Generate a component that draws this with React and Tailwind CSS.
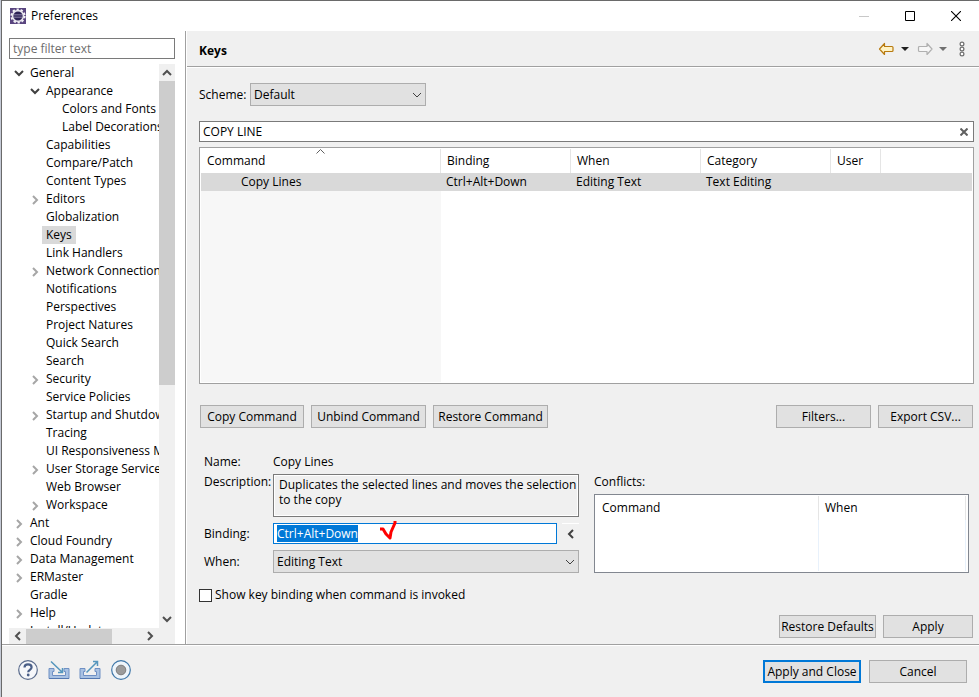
import { useEffect, useRef, useState } from "react";

const tree = [
  { label: "General", depth: 0, state: "open" },
  { label: "Appearance", depth: 1, state: "open" },
  { label: "Colors and Fonts", depth: 2 },
  { label: "Label Decorations", depth: 2 },
  { label: "Capabilities", depth: 1 },
  { label: "Compare/Patch", depth: 1 },
  { label: "Content Types", depth: 1 },
  { label: "Editors", depth: 1, state: "closed" },
  { label: "Globalization", depth: 1 },
  { label: "Keys", depth: 1 },
  { label: "Link Handlers", depth: 1 },
  { label: "Network Connections", depth: 1, state: "closed" },
  { label: "Notifications", depth: 1 },
  { label: "Perspectives", depth: 1 },
  { label: "Project Natures", depth: 1 },
  { label: "Quick Search", depth: 1 },
  { label: "Search", depth: 1 },
  { label: "Security", depth: 1, state: "closed" },
  { label: "Service Policies", depth: 1 },
  { label: "Startup and Shutdown", depth: 1, state: "closed" },
  { label: "Tracing", depth: 1 },
  { label: "UI Responsiveness M", depth: 1 },
  { label: "User Storage Service", depth: 1, state: "closed" },
  { label: "Web Browser", depth: 1 },
  { label: "Workspace", depth: 1, state: "closed" },
  { label: "Ant", depth: 0, state: "closed" },
  { label: "Cloud Foundry", depth: 0, state: "closed" },
  { label: "Data Management", depth: 0, state: "closed" },
  { label: "ERMaster", depth: 0, state: "closed" },
  { label: "Gradle", depth: 0 },
  { label: "Help", depth: 0, state: "closed" },
  { label: "Install/Update", depth: 0 },
];

const indent = ["pl-[2px]", "pl-[18px]", "pl-[34px]"];

const chevronPaths = {
  down: "M1 3l4 4 4-4",
  up: "M1 7l4-4 4 4",
  left: "M7 1L3 5l4 4",
  right: "M3 1l4 4-4 4",
};

function Chevron({ dir, className = "", width = 2 }) {
  return (
    <svg
      viewBox="0 0 10 10"
      className={`h-[10px] w-[10px] shrink-0 ${className}`}
      fill="none"
      stroke="currentColor"
      strokeWidth={width}
      aria-hidden="true"
    >
      <path d={chevronPaths[dir]} />
    </svg>
  );
}

function Button({ children, className = "", primary = false }) {
  return (
    <button
      type="button"
      className={`h-[23px] shrink-0 whitespace-nowrap bg-[#e1e1e1] text-center ${
        primary ? "border-2 border-[#0078d7]" : "border border-[#adadad]"
      } ${className}`}
    >
      {children}
    </button>
  );
}

function Select({ id, value, className = "" }) {
  return (
    <div className={`relative ${className}`}>
      <select
        id={id}
        defaultValue={value}
        className="block h-[23px] w-full appearance-none rounded-none border border-[#adadad] bg-[#e1e1e1] px-[3px] outline-none"
      >
        <option>{value}</option>
      </select>
      <Chevron
        dir="down"
        width={1}
        className="pointer-events-none absolute top-[7px] right-[4px] text-[#404040]"
      />
    </div>
  );
}

function AppIcon() {
  return (
    <svg viewBox="0 0 16 16" className="h-4 w-4" aria-hidden="true">
      <rect width="16" height="16" fill="#59457f" />
      <circle cx="8" cy="8" r="6.4" fill="none" stroke="#f4f2f7" strokeWidth="2.4" strokeDasharray="2.2 1.8" />
      <circle cx="8" cy="8" r="5.4" fill="#2c2255" stroke="#e6e3ec" strokeWidth="1.6" />
      <path d="M4 6.5h8M3.6 8h8.8M4 9.5h8" stroke="#8a80a8" strokeWidth="0.7" />
    </svg>
  );
}

function TitleBar() {
  return (
    <header className="flex h-[30px] shrink-0 items-center bg-white pl-2">
      <AppIcon />
      <h1 className="ml-[5px] flex-1">Preferences</h1>
      <div className="flex">
        <button type="button" aria-label="Minimize" className="flex h-[28px] w-[46px] items-center justify-center text-[#c8c8c8]">
          <svg viewBox="0 0 10 10" className="h-[10px] w-[10px]" stroke="currentColor">
            <path d="M0 5.5h10" />
          </svg>
        </button>
        <button type="button" aria-label="Maximize" className="flex h-[28px] w-[46px] items-center justify-center">
          <svg viewBox="0 0 10 10" className="h-[10px] w-[10px]" fill="none" stroke="currentColor">
            <path d="M0.5 0.5h9v9h-9z" />
          </svg>
        </button>
        <button type="button" aria-label="Close" className="flex h-[28px] w-[46px] items-center justify-center">
          <svg viewBox="0 0 10 10" className="h-[10px] w-[10px]" stroke="currentColor" strokeWidth="1.1">
            <path d="M0 0l10 10M10 0L0 10" />
          </svg>
        </button>
      </div>
    </header>
  );
}

function TreeRow({ item, selected, onSelect }) {
  return (
    <li
      role="treeitem"
      aria-selected={selected}
      className={`flex h-[18px] items-center ${indent[item.depth]}`}
    >
      <span className="flex w-[15px] shrink-0 justify-center">
        {item.state === "open" && <Chevron dir="down" className="text-[#404040]" />}
        {item.state === "closed" && (
          <Chevron dir="right" className="mt-[2px] text-[#a6a6a6]" />
        )}
      </span>
      <button
        type="button"
        onClick={onSelect}
        className={`h-[18px] px-1 whitespace-nowrap ${selected ? "bg-[#d9d9d9]" : ""}`}
      >
        {item.label}
      </button>
    </li>
  );
}

function Sidebar() {
  const [selected, setSelected] = useState("Keys");

  return (
    <nav className="flex w-[183px] shrink-0 flex-col bg-white pt-[7px] pr-[10px] pl-[7px]">
      <input
        type="text"
        aria-label="Filter"
        placeholder="type filter text"
        className="h-[21px] w-full border border-[#7a7a7a] px-[3px] outline-none placeholder:text-[#6d6d6d]"
      />
      <div className="mt-[5px] flex min-h-0 flex-1">
        <ul role="tree" className="min-w-0 flex-1 overflow-hidden">
          {tree.map((item) => (
            <TreeRow
              key={item.label}
              item={item}
              selected={item.label === selected}
              onSelect={() => setSelected(item.label)}
            />
          ))}
        </ul>
        <div className="flex w-4 shrink-0 flex-col items-center bg-[#f0f0f0] text-[#505050]">
          <div className="flex h-[17px] items-center">
            <Chevron dir="up" />
          </div>
          <div className="h-[304px] w-full bg-[#cdcdcd]" />
          <div className="mt-auto flex h-[18px] items-center">
            <Chevron dir="down" />
          </div>
        </div>
      </div>
      <div className="flex h-4 shrink-0 items-center bg-[#f0f0f0] text-[#505050]">
        <div className="flex w-[17px] justify-center">
          <Chevron dir="left" />
        </div>
        <div className="h-[15px] w-[86px] bg-[#cdcdcd]" />
        <div className="mr-4 ml-auto flex w-[18px] justify-center">
          <Chevron dir="right" />
        </div>
      </div>
    </nav>
  );
}

function PageHeader() {
  return (
    <div className="flex h-[36px] shrink-0 items-center border-b border-[#a0a0a0] pr-[14px] pl-3">
      <h2 className="flex-1 pt-[4px] font-bold">Keys</h2>
      <div className="flex items-center">
        <button type="button" aria-label="Back">
          <svg viewBox="0 0 16 14" className="h-[14px] w-4" fill="#fff3c4" stroke="#b87a10" strokeWidth="1.2">
            <path d="M1.5 7l5-5.500v3h7.500q1 0 1 1v3q0 1-1 1h-7.500v3z" strokeLinejoin="round" />
          </svg>
        </button>
        <button type="button" aria-label="Back history" className="ml-[7px]">
          <svg viewBox="0 0 8 4" className="h-1 w-2" fill="#1f1f1f">
            <path d="M0 0h8L4 4z" />
          </svg>
        </button>
        <button type="button" aria-label="Forward" className="ml-2">
          <svg viewBox="0 0 16 14" className="h-[14px] w-4" fill="#f7f7f7" stroke="#b0b0b0" strokeWidth="1.2">
            <path d="M15 7L10 1.500v3h-7.500q-1 0-1 1v3q0 1 1 1h7.500v3z" strokeLinejoin="round" />
          </svg>
        </button>
        <button type="button" aria-label="Forward history" className="ml-[6px]">
          <svg viewBox="0 0 8 4" className="h-1 w-2" fill="#707070">
            <path d="M0 0h8L4 4z" />
          </svg>
        </button>
        <button type="button" aria-label="Menu" className="ml-3">
          <svg viewBox="0 0 6 16" className="h-4 w-[6px]" fill="#fff" stroke="#707070" strokeWidth="1.2">
            <circle cx="3" cy="3" r="1.900" />
            <circle cx="3" cy="8" r="1.900" />
            <circle cx="3" cy="13" r="1.900" />
          </svg>
        </button>
      </div>
    </div>
  );
}

function BindingTable() {
  const head = "h-6 border-r border-[#e5e5e5] px-[6px] text-left font-normal";

  return (
    <div className="mt-[5px] h-[237px] border border-[#a0a0a0] bg-white p-px">
      <table className="h-full w-full table-fixed border-separate border-spacing-0">
        <colgroup>
          <col className="w-[240px]" />
          <col className="w-[130px]" />
          <col className="w-[130px]" />
          <col className="w-[130px]" />
          <col className="w-[50px]" />
          <col />
        </colgroup>
        <thead>
          <tr>
            <th className={`relative ${head}`} aria-sort="ascending">
              Command
              <svg
                viewBox="0 0 9 5"
                className="absolute inset-x-0 top-0 mx-auto h-[5px] w-[9px]"
                fill="none"
                stroke="#606060"
                aria-hidden="true"
              >
                <path d="M0.500 4.500l4-4 4 4" />
              </svg>
            </th>
            <th className={head}>Binding</th>
            <th className={head}>When</th>
            <th className={head}>Category</th>
            <th className={head}>User</th>
            <td className="h-6" />
          </tr>
        </thead>
        <tbody>
          <tr className="bg-[#d9d9d9]">
            <td className="h-[18px] pl-10">Copy Lines</td>
            <td className="px-[5px]">Ctrl+Alt+Down</td>
            <td className="px-[5px]">Editing Text</td>
            <td className="px-[5px]">Text Editing</td>
            <td />
            <td />
          </tr>
          <tr className="h-full">
            <td className="bg-[#f7f7f7]" />
            <td colSpan={5} />
          </tr>
        </tbody>
      </table>
    </div>
  );
}

function Details() {
  const bindingRef = useRef(null);

  useEffect(() => {
    bindingRef.current.focus();
    bindingRef.current.select();
  }, []);

  return (
    <div className="mt-[25px] flex pr-[5px] pl-[5px]">
      <div className="grid w-[375px] shrink-0 grid-cols-[69px_1fr]">
        <span className="h-[21px] leading-[18px]">Name:</span>
        <span className="leading-[18px]">Copy Lines</span>

        <label htmlFor="description" className="leading-[16px]">Description:</label>
        <textarea
          id="description"
          readOnly
          defaultValue="Duplicates the selected lines and moves the selection to the copy"
          className="block h-[43px] w-full resize-none overflow-hidden border border-[#7a7a7a] py-[2px] pr-0 pl-[5px] leading-[15px] shadow-[inset_0_0_0_1px_#fff] outline-none"
        />

        <label htmlFor="binding" className="mt-[6px] leading-[21px]">Binding:</label>
        <div className="mt-[6px] flex">
          <div className="relative flex-1">
            <input
              id="binding"
              ref={bindingRef}
              type="text"
              defaultValue="Ctrl+Alt+Down"
              className="block h-[21px] w-full border border-[#0078d7] bg-white px-[3px] leading-[15px] outline-none selection:bg-[#0078d7] selection:text-white"
            />
            <svg
              viewBox="0 0 18 22"
              className="pointer-events-none absolute -top-[3px] left-[107px] h-[22px] w-[18px]"
              fill="none"
              stroke="#f00"
              strokeWidth="3"
              aria-hidden="true"
            >
              <path d="M0 9h3l3 5 4 4 1-6 4-9V1" strokeLinejoin="round" />
            </svg>
          </div>
          <button
            type="button"
            aria-label="Insert special key"
            className="ml-[5px] flex h-[21px] w-[17px] items-center justify-center border-t border-white text-[#404040]"
          >
            <Chevron dir="left" className="h-[8px] w-[8px]" />
          </button>
        </div>

        <label htmlFor="when" className="mt-[6px] leading-[23px]">When:</label>
        <Select id="when" value="Editing Text" className="mt-[6px]" />
      </div>

      <div className="ml-[15px] flex min-w-0 flex-1 flex-col pt-[21px]">
        <h3 className="mb-[4px] leading-[16px]">Conflicts:</h3>
        <div className="flex-1 border border-[#828790] bg-white p-px">
          <table className="h-full w-full table-fixed border-separate border-spacing-0">
            <colgroup>
              <col className="w-[223px]" />
              <col />
              <col className="w-px" />
            </colgroup>
            <thead>
              <tr>
                <th className="h-6 border-r border-[#e5e5e5] px-[6px] text-left font-normal">Command</th>
                <th className="h-6 border-r border-[#e5e5e5] px-[6px] text-left font-normal">When</th>
                <td className="p-0" />
              </tr>
            </thead>
            <tbody>
              <tr className="h-full">
                <td className="border-r border-[#e8f1fb]" />
                <td className="border-r border-[#e8f1fb]" />
                <td className="p-0" />
              </tr>
            </tbody>
          </table>
        </div>
      </div>
    </div>
  );
}

function KeysPage() {
  return (
    <main className="flex min-w-0 flex-1 flex-col">
      <PageHeader />
      <div className="flex flex-1 flex-col border-t border-white pt-[15px] pr-[5px] pb-[6px] pl-3">
        <div className="flex items-center">
          <label htmlFor="scheme" className="w-[51px]">Scheme:</label>
          <Select id="scheme" value="Default" className="w-[176px]" />
        </div>

        <div className="mt-[15px] flex h-[21px] items-center border border-[#7a7a7a] bg-white pr-[5px]">
          <input
            type="text"
            aria-label="Filter commands"
            defaultValue="COPY LINE"
            className="min-w-0 flex-1 px-[3px] outline-none"
          />
          <button type="button" aria-label="Clear" className="text-[#606060]">
            <svg viewBox="0 0 8 8" className="h-2 w-2" stroke="currentColor" strokeWidth="2">
              <path d="M0.500 0.500l7 7M7.500 0.500l-7 7" />
            </svg>
          </button>
        </div>

        <BindingTable />

        <div className="mt-[21px] flex gap-[7px] pr-px pl-px">
          <Button className="w-[104px]">Copy Command</Button>
          <Button className="w-[115px]">Unbind Command</Button>
          <Button className="w-[115px]">Restore Command</Button>
          <Button className="ml-auto w-[95px]">Filters...</Button>
          <Button className="w-[95px]">Export CSV...</Button>
        </div>

        <Details />

        <label className="mt-[13px] flex items-center gap-[3px]">
          <input
            type="checkbox"
            className="h-[13px] w-[13px] appearance-none border border-[#333] bg-white checked:bg-[#333]"
          />
          Show key binding when command is invoked
        </label>

        <div className="mt-auto flex justify-end gap-[7px] pr-px">
          <Button className="w-[97px]">Restore Defaults</Button>
          <Button className="w-[90px]">Apply</Button>
        </div>
      </div>
    </main>
  );
}

function Tray() {
  return (
    <>
      <path d="M1 8.500h5v3H4.500v4h13v-4H16v-3h5v10H1z" fill="#a9c2e3" stroke="#6f90c4" />
      <path d="M1 18.500h20" stroke="#5478b0" />
    </>
  );
}

function Footer() {
  return (
    <footer className="border-t border-[#a0a0a0]">
      <div className="flex h-[52px] items-center border-t border-white pr-3 pl-4">
        <div className="flex items-center pb-[3px]">
          <button type="button" aria-label="Help">
            <svg viewBox="0 0 20 20" className="h-5 w-5" fill="none">
              <circle cx="10" cy="10" r="9.300" fill="#f6f7fa" stroke="#5a6b8c" strokeWidth="1.200" />
              <path d="M6.500 7.500c0-2 1.500-3.200 3.500-3.200s3.600 1.200 3.600 3c0 2.600-3.400 2.500-3.400 5" stroke="#4a5f88" strokeWidth="2.200" />
              <circle cx="10.200" cy="15" r="1.400" fill="#4a5f88" />
            </svg>
          </button>
          <button type="button" aria-label="Import" className="ml-[10px]">
            <svg viewBox="0 0 22 20" className="h-5 w-[22px]" fill="none">
              <Tray />
              <path d="M3 1.500l11 10.500M14.500 8v4.500H10" stroke="#5596bd" strokeWidth="1.500" />
            </svg>
          </button>
          <button type="button" aria-label="Export" className="ml-[9px]">
            <svg viewBox="0 0 22 20" className="h-5 w-[22px]" fill="none">
              <Tray />
              <path d="M7.500 12.500L18 2M14 1.500h4.500V6" stroke="#5596bd" strokeWidth="1.500" />
            </svg>
          </button>
          <button type="button" aria-label="Record" className="ml-[10px]">
            <svg viewBox="0 0 20 20" className="h-5 w-5">
              <circle cx="10" cy="10" r="9.300" fill="#eef5fb" stroke="#3f77a8" strokeWidth="1.200" />
              <circle cx="10" cy="10" r="4.800" fill="#9b9b9b" stroke="#7c7c7c" />
            </svg>
          </button>
        </div>
        <div className="ml-auto flex gap-2">
          <Button primary className="w-[98px]">Apply and Close</Button>
          <Button className="w-[98px]">Cancel</Button>
        </div>
      </div>
    </footer>
  );
}

export default function App() {
  return (
    <div className="h-screen bg-[#c5cad6] pl-px font-['Open_Sans','Noto_Sans_CJK_KR',sans-serif] text-[12px] leading-[18px] text-black">
      <div className="flex h-full flex-col border-t border-l border-[#6a6a6a] bg-[#f0f0f0]">
        <TitleBar />
        <div className="flex min-h-0 flex-1">
          <Sidebar />
          <div className="w-[2px] shrink-0 border-l border-[#a0a0a0] bg-white" />
          <KeysPage />
        </div>
        <Footer />
      </div>
    </div>
  );
}
